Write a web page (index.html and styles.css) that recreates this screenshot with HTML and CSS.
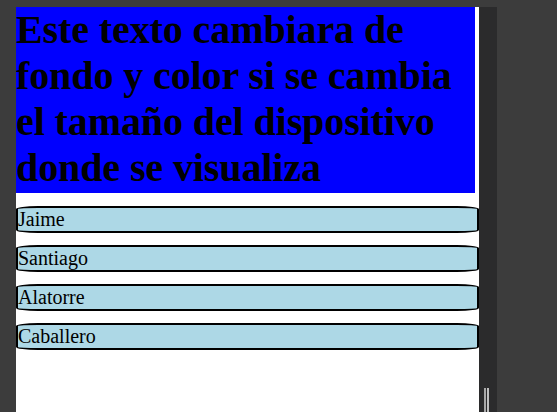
FILE: index.html
```html
<!DOCTYPE html>
<html lang="es">
<head>
<meta charset="utf-8">
<title>Responsive</title>
<link rel="stylesheet" href="styles.css">
</head>
<body>
<div class="frame">
  <div class="page">
    <h1 class="titulo">Este texto cambiara de fondo y color si se cambia el tamaño del dispositivo donde se visualiza</h1>
    <div class="lista">
      <div class="item">Jaime</div>
      <div class="item">Santiago</div>
      <div class="item">Alatorre</div>
      <div class="item">Caballero</div>
    </div>
  </div>
  <div class="strip">
    <div class="grip"></div>
  </div>
</div>
</body>
</html>
```
FILE: styles.css
```css
html, body {
  margin: 0;
  padding: 0;
  height: 100%;
}
body {
  background: #3c3c3c;
  font-family: "Liberation Serif", "Times New Roman", serif;
  overflow: hidden;
}
.frame {
  display: flex;
  padding: 7px 0 0 16px;
  height: 100%;
  box-sizing: border-box;
}
.page {
  width: 463px;
  background: #ffffff;
  height: 100%;
}
.titulo {
  margin: 0 4px 0 0;
  padding: 0 0 2px 0;
  background: #0000ff;
  color: #000000;
  font-size: 40px;
  font-weight: bold;
  line-height: 46px;
  letter-spacing: -0.1px;
}
.lista {
  display: flex;
  flex-direction: column;
  gap: 12px;
  margin-top: 13px;
}
.item {
  background: #add8e6;
  border: 2px solid #000000;
  border-bottom-width: 2.5px;
  border-radius: 22px / 3px;
  font-size: 20px;
  line-height: 23px;
  color: #000000;
}
.strip {
  width: 18px;
  height: 100%;
  background: #2b2b2c;
  position: relative;
}
.grip {
  position: absolute;
  left: 5px;
  bottom: 0;
  width: 5px;
  height: 24px;
  border-left: 2px solid #a8a8a8;
  border-right: 2px solid #c0c0c0;
  box-sizing: border-box;
}
```
